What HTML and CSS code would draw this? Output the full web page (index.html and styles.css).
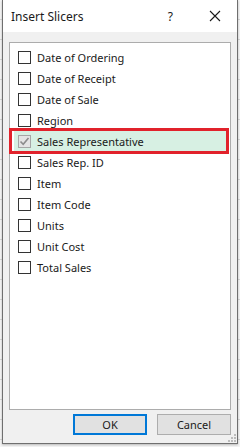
FILE: index.html
```html
<!DOCTYPE html>
<html>

<head>
    <title>Insert Slicers</title>
    <link rel="stylesheet" href="styles.css">
</head>

<body>
    <div class="dialog">
        <div class="titlebar">
            <span class="title">Insert Slicers</span>
            <span class="help">?</span>
            <svg class="close" width="12" height="12" viewBox="0 0 12 12">
                <path d="M1 1 L11 11 M11 1 L1 11" stroke="#1a1a1a" stroke-width="1.1" fill="none" />
            </svg>
        </div>
        <div class="content">
            <div class="fields">
                <div class="field"><span class="box"></span>Date of Ordering</div>
                <div class="field"><span class="box"></span>Date of Receipt</div>
                <div class="field"><span class="box"></span>Date of Sale</div>
                <div class="field"><span class="box"></span>Region</div>
                <div class="field selected">
                    <span class="box checked">
                        <svg width="11" height="11" viewBox="0 0 11 11">
                            <path d="M1.5 5.5 L4.2 8.3 L9.5 2" stroke="#8c8c8c" stroke-width="1.6" fill="none" />
                        </svg>
                    </span>Sales Representative
                </div>
                <div class="field"><span class="box"></span>Sales Rep. ID</div>
                <div class="field"><span class="box"></span>Item</div>
                <div class="field"><span class="box"></span>Item Code</div>
                <div class="field"><span class="box"></span>Units</div>
                <div class="field"><span class="box"></span>Unit Cost</div>
                <div class="field"><span class="box"></span>Total Sales</div>
            </div>
            <div class="buttons">
                <button class="btn default">OK</button>
                <button class="btn">Cancel</button>
            </div>
            <svg class="grip" width="9" height="9" viewBox="0 0 9 9">
                <rect x="7" y="1" width="2" height="2" fill="#bcbcbc" />
                <rect x="4" y="4" width="2" height="2" fill="#bcbcbc" />
                <rect x="7" y="4" width="2" height="2" fill="#bcbcbc" />
                <rect x="1" y="7" width="2" height="2" fill="#bcbcbc" />
                <rect x="4" y="7" width="2" height="2" fill="#bcbcbc" />
                <rect x="7" y="7" width="2" height="2" fill="#bcbcbc" />
            </svg>
        </div>
        <!-- annotation box round the picked field -->
        <div class="marker"></div>
    </div>
</body>

</html>
```

FILE: styles.css
```css
* {
    margin: 0;
    padding: 0;
    box-sizing: border-box;
}

body {
    width: 240px;
    height: 447px;
    overflow: hidden;
    background-color: #f4f4f4;
    background-image: repeating-linear-gradient(to bottom, transparent 0, transparent 19px, #d6d6d6 19px, #d6d6d6 20px);
    font-family: "Noto Sans", "Liberation Sans", sans-serif;
    font-size: 11px;
    color: #1a1a1a;
}

.dialog {
    position: relative;
    width: 236px;
    height: 444px;
    margin-left: 2px;
    background: #f0f0f0;
    border: 1px solid #6f6f6f;
    border-top: none;
    display: flex;
    flex-direction: column;
    box-shadow: 0 1px 2px rgba(0, 0, 0, 0.25);
}

.titlebar {
    height: 32px;
    background: #fff;
    display: flex;
    align-items: center;
    padding-left: 8px;
}

.title {
    font-size: 12px;
    flex: 1;
}

.help {
    font-size: 12px;
    margin-right: 36px;
}

.close {
    margin-right: 16px;
}

.content {
    position: relative;
    flex: 1;
    padding: 10px 6px 0 6px;
}

.fields {
    height: 368px;
    background: #fff;
    border: 1px solid #acacac;
    padding: 4px 0 0 8px;
}

.field {
    height: 21px;
    display: flex;
    align-items: center;
    gap: 6px;
    white-space: nowrap;
}

.field.selected {
    background: #d7f0e3;
    margin-left: -4px;
    padding-left: 4px;
    margin-right: 4px;
}

.box {
    width: 13px;
    height: 13px;
    border: 1px solid #333;
    background: #fff;
    display: flex;
    align-items: center;
    justify-content: center;
}

.box.checked {
    border-color: #a6a6a6;
    background: #e4e4e4;
}

.buttons {
    display: flex;
    justify-content: flex-end;
    gap: 10px;
    margin-top: 4px;
}

.btn {
    width: 74px;
    height: 21px;
    background: #e1e1e1;
    border: 1px solid #adadad;
    font-family: "Noto Sans", "Liberation Sans", sans-serif;
    font-size: 11px;
    color: #1a1a1a;
}

.btn.default {
    border: 2px solid #0078d7;
}

.grip {
    position: absolute;
    right: 1px;
    bottom: 1px;
}

.marker {
    position: absolute;
    left: 6px;
    top: 128px;
    width: 220px;
    height: 26px;
    border: 3px solid #e1222b;
}
```
